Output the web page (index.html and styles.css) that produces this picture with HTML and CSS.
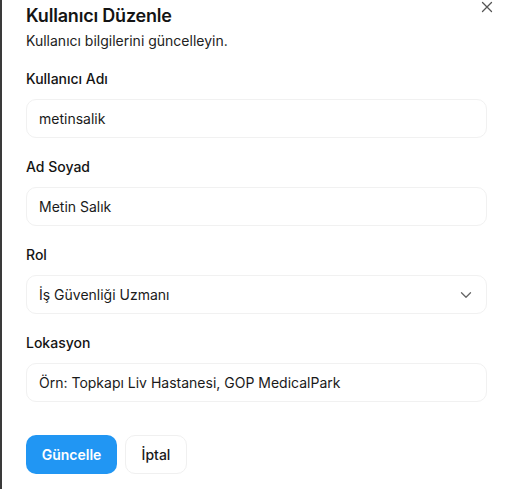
FILE: index.html
```html
<!DOCTYPE html>
<html lang="tr">
<head>
<meta charset="utf-8">
<link rel="stylesheet" href="styles.css">
</head>
<body>
<div class="dialog">
  <button class="close" aria-label="Kapat">
    <svg width="12" height="12" viewBox="0 0 12 12"><path d="M1.5 1.5l9 9M10.5 1.5l-9 9" stroke="#555" stroke-width="1.3" stroke-linecap="round" fill="none"/></svg>
  </button>
  <h2 class="title">Kullanıcı Düzenle</h2>
  <p class="subtitle">Kullanıcı bilgilerini güncelleyin.</p>
  <div class="field">
    <label class="label">Kullanıcı Adı</label>
    <div class="input">metinsalik</div>
  </div>
  <div class="field">
    <label class="label">Ad Soyad</label>
    <div class="input">Metin Salık</div>
  </div>
  <div class="field">
    <label class="label">Rol</label>
    <div class="input select">
      <span>İş Güvenliği Uzmanı</span>
      <svg width="12" height="8" viewBox="0 0 12 8"><path d="M1.5 1.8l4.5 4.4 4.5-4.4" stroke="#666" stroke-width="1.3" fill="none" stroke-linecap="round" stroke-linejoin="round"/></svg>
    </div>
  </div>
  <div class="field">
    <label class="label">Lokasyon</label>
    <div class="input">Örn: Topkapı Liv Hastanesi, GOP MedicalPark</div>
  </div>
  <div class="actions">
    <button class="btn primary">Güncelle</button>
    <button class="btn secondary">İptal</button>
  </div>
</div>
</body>
</html>
```
FILE: styles.css
```css
html, body {
  margin: 0;
  padding: 0;
  background: #fff;
}
body {
  font-family: Inter, "Noto Sans", sans-serif;
  color: #141414;
  border-left: 2px solid #3a3a3a;
  min-height: 489px;
  box-sizing: border-box;
}
.dialog {
  position: relative;
  padding: 0 20px 0 24px;
}
.close {
  position: absolute;
  top: 1px;
  right: 14px;
  background: none;
  border: 0;
  padding: 0;
  width: 12px;
  height: 12px;
  display: flex;
}
.title {
  margin: 0;
  padding-top: 4px;
  font-size: 18px;
  line-height: 24px;
  font-weight: 600;
  letter-spacing: -0.2px;
}
.subtitle {
  margin: 3px 0 0;
  font-size: 14px;
  line-height: 20px;
  color: #222;
}
.field {
  display: flex;
  flex-direction: column;
  margin-top: 18px;
}
.field + .field {
  margin-top: 19px;
}
.label {
  font-size: 14px;
  line-height: 20px;
  font-weight: 500;
  margin-bottom: 10px;
}
.input {
  height: 39px;
  box-sizing: border-box;
  border: 1px solid #f1f1f1;
  border-radius: 10px;
  padding: 0 12px;
  display: flex;
  align-items: center;
  font-size: 14px;
  color: #1a1a1a;
}
.select {
  justify-content: space-between;
  padding-right: 14px;
}
.actions {
  display: flex;
  gap: 8px;
  margin-top: 33px;
}
.btn {
  height: 39px;
  border-radius: 10px;
  font-family: inherit;
  font-size: 14px;
  font-weight: 600;
  padding: 0 15px;
  cursor: pointer;
}
.primary {
  background: #2196f3;
  border: 0;
  color: #fff;
  width: 91px;
}
.secondary {
  background: #fff;
  border: 1px solid #f0f0f0;
  color: #1a1a1a;
  font-weight: 500;
  width: 62px;
}
```
